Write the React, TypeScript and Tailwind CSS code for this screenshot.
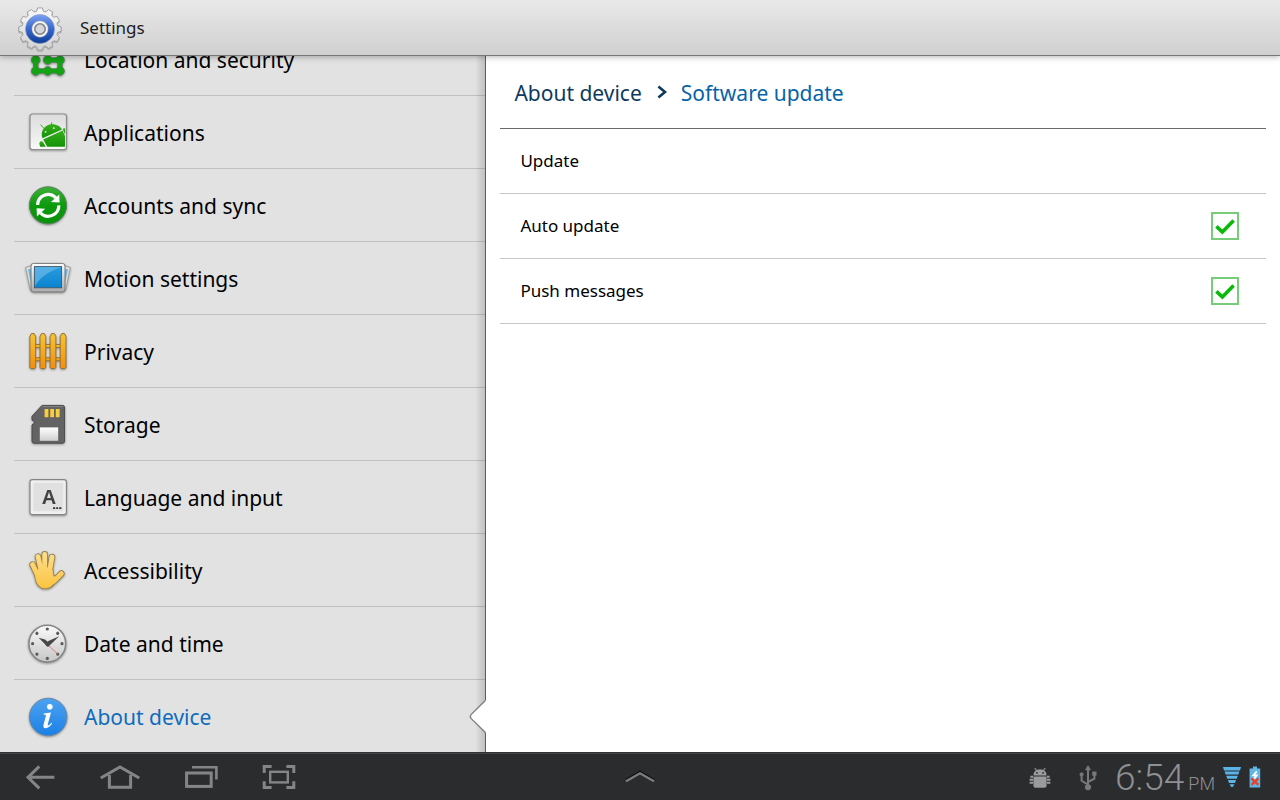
import { useState, type ReactNode } from "react";

const gearPath = (() => {
  const teeth = 12;
  const points: string[] = [];
  for (let i = 0; i < teeth; i++) {
    const base = (i / teeth) * Math.PI * 2 - Math.PI / 2;
    const corners: [number, number][] = [
      [-0.19, 18],
      [-0.11, 21.2],
      [0.11, 21.2],
      [0.19, 18],
    ];
    for (const [offset, radius] of corners) {
      const x = 22 + Math.cos(base + offset) * radius;
      const y = 22 + Math.sin(base + offset) * radius;
      points.push(`${x.toFixed(2)} ${y.toFixed(2)}`);
    }
  }
  return `M${points.join("L")}Z`;
})();

function GearIcon() {
  return (
    <svg viewBox="0 0 44 44" className="size-11 shrink-0 overflow-visible" aria-hidden="true">
      <defs>
        <linearGradient id="gear-body" x1="0" y1="0" x2="0" y2="1">
          <stop offset="0" stopColor="#fafafa" />
          <stop offset="1" stopColor="#d2d2d2" />
        </linearGradient>
        <linearGradient id="gear-ring" x1="0" y1="0" x2="0" y2="1">
          <stop offset="0" stopColor="#7ba2f2" />
          <stop offset="0.5" stopColor="#3767cf" />
          <stop offset="1" stopColor="#0e3d96" />
        </linearGradient>
      </defs>
      <path d={gearPath} transform="translate(0 1)" fill="#999" stroke="#999" strokeWidth="1.5" strokeLinejoin="round" opacity="0.6" />
      <path d={gearPath} fill="url(#gear-body)" stroke="#a4a4a4" strokeWidth="1" strokeLinejoin="round" />
      <circle cx="22" cy="22" r="14.5" fill="url(#gear-ring)" stroke="#8b9cc0" strokeWidth="0.6" />
      <circle cx="22" cy="22" r="8.4" fill="#f4f4f4" stroke="#50648f" strokeWidth="0.6" />
      <circle cx="22" cy="22" r="5.2" fill="#d5d6d9" stroke="#85878d" strokeWidth="1.6" />
    </svg>
  );
}

function Icon({ children }: { children: ReactNode }) {
  return (
    <svg viewBox="0 0 40 40" className="size-10 shrink-0 overflow-visible drop-shadow-[0_1px_1px_rgba(0,0,0,0.35)]" aria-hidden="true">
      {children}
    </svg>
  );
}

function LocationIcon() {
  const dots = [9, 21, 32].flatMap((y) => [7.7, 19.7, 32].map((x) => ({ x, y })));
  return (
    <Icon>
      <g stroke="#5d7f5d" strokeWidth="5.5" fill="none">
        <path d="M7.7 9V32H32V21H19.7V9H32" />
      </g>
      {dots.map((d) => (
        <circle key={`${d.x}-${d.y}`} cx={d.x} cy={d.y} r="4.4" fill="#14a314" stroke="#5d7f5d" strokeWidth="0.9" />
      ))}
      <path d="M7.7 9V32H32V21H19.7V9H32" stroke="#14a314" strokeWidth="4" fill="none" />
    </Icon>
  );
}

function ApplicationsIcon() {
  return (
    <Icon>
      <defs>
        <linearGradient id="app-tile" x1="0" y1="0" x2="0" y2="1">
          <stop offset="0" stopColor="#dcdcdc" />
          <stop offset="1" stopColor="#f8f8f8" />
        </linearGradient>
        <linearGradient id="app-tile-green" x1="0" y1="0" x2="0" y2="1">
          <stop offset="0" stopColor="#35ae1b" />
          <stop offset="1" stopColor="#149207" />
        </linearGradient>
      </defs>
      <rect x="2" y="2" width="36.5" height="35.5" rx="2.5" fill="url(#app-tile)" stroke="#8c8c8c" strokeWidth="1.2" />
      <g fill="url(#app-tile-green)">
        <path d="M14.4 26.2C11.8 18.4 17.4 12.4 23.6 12.2C28.6 12 32.6 14.4 34 17.4Z" />
        <path d="M15.2 27.4L34.6 18.6L37 24V34.8H19.2Z" />
        <path d="M11.6 33C10.4 29.6 14 28 15.4 30.8L17.8 34.8H12.2Z" />
        <path d="M35 18C34.8 16.2 36.4 16 37.2 16.8V22.4Z" />
      </g>
      <path d="M12.4 12.6L16.4 16.8M23.6 10.4V14" stroke="#35ae1b" strokeWidth="1" />
      <circle cx="17.6" cy="19.8" r="0.9" fill="#e8f4e6" />
      <circle cx="25.8" cy="16.2" r="0.9" fill="#e8f4e6" />
    </Icon>
  );
}

function SyncIcon() {
  return (
    <Icon>
      <defs>
        <linearGradient id="sync-disc" x1="0" y1="0" x2="0" y2="1">
          <stop offset="0" stopColor="#3eae38" />
          <stop offset="0.5" stopColor="#0d9a0d" />
          <stop offset="1" stopColor="#0a8f0a" />
        </linearGradient>
      </defs>
      <circle cx="20" cy="20.4" r="18.6" fill="url(#sync-disc)" stroke="#55845a" strokeWidth="1" />
      <g fill="none" stroke="#fff" strokeWidth="3.2">
        <path d="M9.6 20A10.6 10.6 0 0 1 27.8 12.8" />
        <path d="M30.8 20.4A10.6 10.6 0 0 1 12.6 28" />
      </g>
      <path d="M31.2 9.4L31.6 17.6L23 17Z" fill="#fff" />
      <path d="M9 31.4L8.6 23.2L17.2 23.8Z" fill="#fff" />
    </Icon>
  );
}

function MotionIcon() {
  return (
    <Icon>
      <defs>
        <linearGradient id="motion-screen" x1="0" y1="0" x2="0" y2="1">
          <stop offset="0" stopColor="#2b9bdc" />
          <stop offset="1" stopColor="#0a84d0" />
        </linearGradient>
        <linearGradient id="motion-frame" x1="0" y1="0" x2="0" y2="1">
          <stop offset="0" stopColor="#fdfdfd" />
          <stop offset="1" stopColor="#aaa" />
        </linearGradient>
      </defs>
      <g fill="#ddd" stroke="#9c9c9c" strokeWidth="0.9" strokeLinejoin="round">
        <path d="M-2.4 9.4L6 7V33L2.4 32Z" />
        <path d="M42.4 9.4L34 7V33L37.6 32Z" />
      </g>
      <path d="M0 11.6L4 10.4V30Z" fill="#66b9e6" />
      <path d="M40 11.6L36 10.4V30Z" fill="#66b9e6" />
      <rect x="3" y="5.4" width="34" height="28.6" rx="2.6" fill="url(#motion-frame)" stroke="#777" strokeWidth="1" />
      <rect x="6.4" y="8.6" width="27.2" height="21.2" fill="url(#motion-screen)" stroke="#3c5668" strokeWidth="0.9" />
      <path d="M7 9H33.2C25 12 13 17 7 28Z" fill="#75bfec" opacity="0.6" />
    </Icon>
  );
}

function PrivacyIcon() {
  return (
    <Icon>
      <defs>
        <linearGradient id="fence" x1="0" y1="0" x2="0" y2="1">
          <stop offset="0" stopColor="#f5c534" />
          <stop offset="1" stopColor="#f28e0e" />
        </linearGradient>
      </defs>
      <g stroke="#8e6a2c" strokeWidth="0.9">
        <rect x="6" y="13.4" width="28" height="3" fill="#f2bd38" />
        <rect x="6" y="26.8" width="28" height="3" fill="#f2a922" />
        {[1.9, 12, 22.1, 32.2].map((x) => (
          <path key={x} d={`M${x} 5.6L${x + 1.6} 2.6H${x + 4.2}L${x + 5.8} 5.6V36.6L${x + 4.8} 37.6H${x + 1}L${x} 36.6Z`} fill="url(#fence)" strokeLinejoin="round" />
        ))}
      </g>
    </Icon>
  );
}

function StorageIcon() {
  return (
    <Icon>
      <defs>
        <linearGradient id="sd-label" x1="0" y1="0" x2="0" y2="1">
          <stop offset="0" stopColor="#fff" />
          <stop offset="1" stopColor="#cfcfcf" />
        </linearGradient>
      </defs>
      <path
        d="M14 1.4H34.6Q36.6 1.4 36.6 3.4V37.2Q36.6 39.2 34.6 39.2H6Q4 39.2 4 37.2V20.8L6.4 19V17.4L4 16V12.2Z"
        fill="#636363"
        stroke="#4b4b4b"
        strokeWidth="1"
        strokeLinejoin="round"
      />
      <path d="M14.4 2.6H35" stroke="#8c8c8c" strokeWidth="0.8" />
      <g fill="#f7cf3e">
        <rect x="16.6" y="5" width="3.8" height="8.2" />
        <rect x="22.2" y="5" width="3.8" height="8.2" />
        <rect x="27.8" y="5" width="3.8" height="8.2" />
      </g>
      <rect x="11.8" y="23.4" width="18.4" height="13.4" fill="url(#sd-label)" />
    </Icon>
  );
}

function LanguageIcon() {
  return (
    <Icon>
      <rect x="2" y="2.6" width="36.4" height="35" rx="2.4" fill="#f0f0f0" stroke="#858585" strokeWidth="1.2" />
      <rect x="5" y="5.4" width="30.4" height="29" rx="2" fill="#e0e0e0" stroke="#ececec" strokeWidth="1" />
      <text x="21" y="27" textAnchor="middle" fill="#424242" className="font-['Liberation_Sans',sans-serif] text-[20px] font-bold">
        A
      </text>
      <path d="M25 31.2H27.2M28.2 31.2H30.2M31.2 31.2H33.4" stroke="#333" strokeWidth="1.7" />
    </Icon>
  );
}

function HandIcon() {
  const fingers = "M4.6 14.6L9 24M10 6.6L13 20M16.7 4.4V20M24 7L21.6 21M33.4 23.6L26 31";
  const palm = "M8.4 21L12 18H21L24.4 20.4L25 26.4L29 27.8C27 33 23 38 17.4 38C11 38 8.6 33 7.6 27Z";
  return (
    <Icon>
      <defs>
        <linearGradient id="hand-fill" gradientUnits="userSpaceOnUse" x1="0" y1="0" x2="0" y2="40">
          <stop offset="0" stopColor="#fce093" />
          <stop offset="1" stopColor="#fbc33c" />
        </linearGradient>
      </defs>
      <g stroke="#97814f" strokeLinecap="round" strokeLinejoin="round">
        <path d={fingers} fill="none" strokeWidth="6.6" />
        <path d={palm} fill="#97814f" strokeWidth="2.6" />
      </g>
      <g stroke="url(#hand-fill)" strokeLinecap="round" strokeLinejoin="round">
        <path d={fingers} fill="none" strokeWidth="4.8" />
        <path d={palm} fill="url(#hand-fill)" strokeWidth="0.8" />
      </g>
    </Icon>
  );
}

function ClockIcon() {
  return (
    <Icon>
      <defs>
        <linearGradient id="clock-face" x1="0" y1="0" x2="0" y2="1">
          <stop offset="0" stopColor="#fafafa" />
          <stop offset="1" stopColor="#c6c6c6" />
        </linearGradient>
      </defs>
      <circle cx="19.3" cy="20.7" r="18.4" fill="url(#clock-face)" stroke="#868686" strokeWidth="1.6" />
      {[0, 45, 90, 135, 180, 225, 270, 315].map((angle) => (
        <circle key={angle} cx="19.3" cy="6" r="1.6" fill="#5a5a5a" transform={`rotate(${angle} 19.3 20.7)`} />
      ))}
      <path d="M19.3 21.3L29.6 31" stroke="#d9736c" strokeWidth="0.9" />
      <path d="M10.6 14.8L17 16.4L21.8 20.4L19.4 23.6Z" fill="#474747" />
      <path d="M31.2 13.2L20.4 18L17.2 21.8L20 24Z" fill="#474747" />
    </Icon>
  );
}

function InfoIcon() {
  return (
    <Icon>
      <defs>
        <linearGradient id="info-disc" x1="0" y1="0" x2="0" y2="1">
          <stop offset="0" stopColor="#4ea2f0" />
          <stop offset="1" stopColor="#1a80e6" />
        </linearGradient>
      </defs>
      <circle cx="20.2" cy="21" r="18.8" fill="url(#info-disc)" stroke="#6b87a6" strokeWidth="1" />
      <circle cx="21.8" cy="10.8" r="2.8" fill="#fff" />
      <path d="M15.6 17.4L23 16.4L19.8 28.2Q19.4 30.2 21.4 28.8L23.6 26.8L24.2 27.6Q20.6 32.4 17.4 32.2Q14.6 31.8 15.6 28.4L18 19.6Q18 18.6 15.6 18.6Z" fill="#fff" />
    </Icon>
  );
}

const sections: { label: string; icon: ReactNode }[] = [
  { label: "Location and security", icon: <LocationIcon /> },
  { label: "Applications", icon: <ApplicationsIcon /> },
  { label: "Accounts and sync", icon: <SyncIcon /> },
  { label: "Motion settings", icon: <MotionIcon /> },
  { label: "Privacy", icon: <PrivacyIcon /> },
  { label: "Storage", icon: <StorageIcon /> },
  { label: "Language and input", icon: <LanguageIcon /> },
  { label: "Accessibility", icon: <HandIcon /> },
  { label: "Date and time", icon: <ClockIcon /> },
  { label: "About device", icon: <InfoIcon /> },
];

function Sidebar() {
  return (
    <nav aria-label="Settings sections" className="relative flex w-[38%] shrink-0 flex-col justify-end border-r border-[#5c5c5c] bg-[#e2e2e2]">
      <div className="pointer-events-none absolute inset-y-0 right-0 w-2.5 bg-linear-to-l from-black/15 to-transparent" />
      <ul className="pl-3.5">
        {sections.map(({ label, icon }) => {
          const active = label === "About device";
          return (
            <li key={label} className="relative border-b border-black/15 last:border-b-0">
              <a
                href="#"
                aria-current={active ? "page" : undefined}
                className={`flex h-[72px] items-center gap-4 pl-3.5 text-[21px] ${active ? "text-[#0f6cbd]" : "text-black"}`}
              >
                {icon}
                <span className="pt-1">{label}</span>
              </a>
              {active && (
                <svg viewBox="0 0 17 34" className="absolute top-5 -right-px h-[34px] w-[17px] overflow-visible" aria-hidden="true">
                  <path d="M17 0L2 14.6Q0.6 16.5 2 18.4L17 33Z" fill="#fff" />
                  <path d="M16.4 0.4L2 14.6Q0.6 16.5 2 18.4L16.4 32.6" fill="none" stroke="#808080" strokeWidth="1.4" />
                </svg>
              )}
            </li>
          );
        })}
      </ul>
    </nav>
  );
}

function CheckRow({ id, label }: { id: string; label: string }) {
  const [checked, setChecked] = useState(true);
  return (
    <li className="flex h-[65px] items-center justify-between border-b border-[#c6c6c6] pr-[27px] pl-5">
      <label htmlFor={id} className="flex-1">
        {label}
      </label>
      <span className="relative flex size-7">
        <input
          id={id}
          type="checkbox"
          checked={checked}
          onChange={(e) => setChecked(e.target.checked)}
          className="size-7 appearance-none border-2 border-[#78cb78] bg-white"
        />
        {checked && (
          <svg viewBox="0 0 28 28" className="pointer-events-none absolute inset-0 size-7" aria-hidden="true">
            <path d="M5.4 14.4L11.4 20L22.6 8.6" fill="none" stroke="#0ab90a" strokeWidth="3.6" />
          </svg>
        )}
      </span>
    </li>
  );
}

function Details() {
  return (
    <main className="min-w-0 flex-1 bg-white px-3.5">
      <nav aria-label="Breadcrumb" className="flex h-[73px] items-center border-b border-[#6a6a6a] pt-1 pl-3.5 text-[21px]">
        <a href="#" className="text-[#0d3a5e]">
          About device
        </a>
        <svg viewBox="0 0 10 14" className="mr-3.5 mb-1 ml-[15px] h-3.5 w-2.5" aria-hidden="true">
          <path d="M1.4 1.4L8 7L1.4 12.6" fill="none" stroke="#0d3a5e" strokeWidth="2.6" />
        </svg>
        <h1 className="text-[#0564a8]">Software update</h1>
      </nav>
      <ul className="text-[17px] text-black">
        <li className="flex h-[65px] items-center border-b border-[#c6c6c6] pl-5">
          <button type="button" className="flex-1 text-left">
            Update
          </button>
        </li>
        <CheckRow id="auto-update" label="Auto update" />
        <CheckRow id="push-messages" label="Push messages" />
      </ul>
    </main>
  );
}

function NavButton({ label, children }: { label: string; children: ReactNode }) {
  return (
    <button type="button" aria-label={label} className="flex h-12 w-20 items-center justify-center">
      <svg viewBox="0 0 40 28" className="h-7 w-10" fill="none" stroke="#858585" strokeWidth="3" aria-hidden="true">
        {children}
      </svg>
    </button>
  );
}

function SystemBar() {
  return (
    <footer className="grid h-12 shrink-0 grid-cols-[1fr_auto_1fr] items-center bg-[#2b2c2e] shadow-[inset_0_1px_0_#323335,inset_0_2px_0_#434446]">
      <div className="flex">
        <NavButton label="Back">
          <path d="M8 15.3H34.4M19.3 4.4L8 15.3L19.3 26.4" />
        </NavButton>
        <NavButton label="Home">
          <path d="M0.8 16L20 5L39.2 16" />
          <path d="M9.4 13V25.2H30.6V13" />
        </NavButton>
        <NavButton label="Recent apps">
          <rect x="6.6" y="11" width="24.6" height="13.4" />
          <path d="M12 5.2H36.4V17.6" strokeWidth="2.6" />
        </NavButton>
        <NavButton label="Screenshot">
          <rect x="10.2" y="9.8" width="17.6" height="10.6" strokeWidth="2.4" />
          <path d="M4.2 11V4.6H11.6M26.4 4.6H33.8V11M33.8 19.2V25.6H26.4M11.6 25.6H4.2V19.2" />
        </NavButton>
      </div>
      <button type="button" aria-label="Open tray" className="flex h-12 items-center">
        <svg viewBox="0 0 32 16" className="h-4 w-8" aria-hidden="true">
          <path d="M2 12L16 4L30 12" fill="none" stroke="#111" strokeWidth="2.4" />
          <path d="M2 13.2L16 5.2L30 13.2" fill="none" stroke="#7e7e7e" strokeWidth="2.2" />
        </svg>
      </button>
      <div className="flex items-center justify-end pr-[19px] text-[#8e9093]">
        <svg viewBox="0 0 22 22" className="mt-1 mr-7 size-[22px]" fill="#9a9b9c" aria-hidden="true">
          <path d="M4.4 8.4Q4.6 2.4 11 2.2Q17.4 2.4 17.6 8.4Z" />
          <path d="M5.8 1L7.8 4M16.2 1L14.2 4" stroke="#9a9b9c" strokeWidth="1.1" />
          <path d="M4.4 9.4H17.6V18.6Q17.6 20.8 15.4 20.8H6.6Q4.4 20.8 4.4 18.6Z" />
          <path d="M1.4 9.8H4M0.6 12.8H4M0.6 15.8H4M18 9.8H20.6M18 12.8H21.4M18 15.8H21.4" stroke="#9a9b9c" strokeWidth="2" />
          <circle cx="8" cy="5.8" r="0.9" fill="#2b2c2e" />
          <circle cx="14" cy="5.8" r="0.9" fill="#2b2c2e" />
        </svg>
        <svg viewBox="0 0 18 26" className="mt-1 mr-[18px] h-[26px] w-[18px]" fill="#77797b" stroke="#77797b" aria-hidden="true">
          <path d="M9 3V22M9 19.6L2.6 15.8V10M9 17L15.4 13.6V8.6" fill="none" strokeWidth="2" />
          <path d="M9 0.8L11.4 4.8H6.6Z" />
          <circle cx="2.6" cy="9.4" r="1.6" />
          <rect x="13.8" y="7" width="3.2" height="3.2" />
          <circle cx="9" cy="22.2" r="2.7" />
        </svg>
        <time className="mr-2 flex items-baseline gap-1 pt-0.5 font-['Roboto',sans-serif] leading-none font-light">
          <span className="text-[37px]">6:54</span>
          <span className="text-[18px]">PM</span>
        </time>
        <svg viewBox="0 0 18 20" className="mt-0.5 mr-2 h-5 w-[18px]" aria-hidden="true">
          <g fill="#5bb4e8">
            <path d="M0 0H18L17 3.4H1Z" />
            <path d="M1.6 4.6H16.4L15.4 7.6H2.6Z" />
            <path d="M3.2 8.8H14.8L13.8 11.8H4.2Z" />
            <path d="M5 13H13L12 16H6Z" />
            <path d="M6.6 17.2H11.4L9.8 20H8.2Z" />
          </g>
        </svg>
        <svg viewBox="0 0 12 22" className="mt-0.5 h-[22px] w-3" aria-hidden="true">
          <path d="M4 0.4H8V2.4H11.2V21.4H0.6V2.4H4Z" fill="#62b6e6" />
          <path d="M7.8 5.4L4.4 9.4H7.6L5.2 12.6" fill="none" stroke="#fff" strokeWidth="1.8" />
          <path d="M2.4 12.4L9.4 18.8M9.4 12.4L2.4 18.8" stroke="#e8402a" strokeWidth="2.4" />
        </svg>
      </div>
    </footer>
  );
}

export default function App() {
  return (
    <div className="flex h-screen flex-col overflow-hidden bg-white font-['Noto_Sans',sans-serif]">
      <header className="z-10 flex h-14 shrink-0 items-center gap-[18px] border-b border-[#777] bg-linear-to-b from-[#e9e9e9] to-[#d0d0d0] pt-0.5 pl-[18px] shadow-[0_1px_6px_rgba(0,0,0,0.3)]">
        <GearIcon />
        <span className="pb-0.5 text-[17px] text-[#1c1c1c]">Settings</span>
      </header>
      <div className="flex min-h-0 flex-1">
        <Sidebar />
        <Details />
      </div>
      <SystemBar />
    </div>
  );
}
